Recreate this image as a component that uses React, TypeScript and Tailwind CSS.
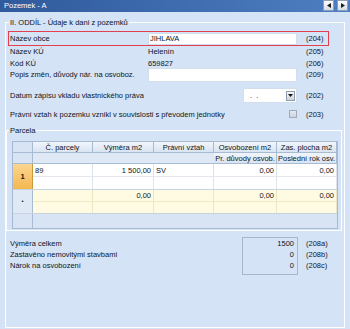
import React, { FC, ReactNode } from "react";

interface RowProps {
    label: string;
    code: string;
    children?: ReactNode;
    className?: string;
}

const Row: FC<RowProps> = ({ label, code, children, className = "" }) => {
    return (
        <div className={"flex w-[324px] pl-[4px] " + className}>
            <div className="flex-1 whitespace-nowrap">{label}</div>
            {children}
            <div className="ml-[9px] w-[24px] whitespace-nowrap">{code}</div>
        </div>
    );
};

const TitleButton: FC<{ dir: "left" | "right" }> = ({ dir }) => (
    <div className="flex h-[11px] w-[11px] items-center justify-center border border-[#8d9db5] bg-gradient-to-b from-[#ffffff] to-[#d3dbe7]">
        <svg width="4" height="5" viewBox="0 0 4 5">
            {dir === "left" ? <polygon points="4,0 0,2.5 4,5" fill="#1c1c1c" /> : <polygon points="0,0 4,2.5 0,5" fill="#1c1c1c" />}
        </svg>
    </div>
);

const HeadCell: FC<{ w: string; children?: ReactNode }> = ({ w, children }) => (
    <div className={w + " flex h-[11px] items-center justify-center whitespace-nowrap border-r border-b border-[#a9bbd2] bg-gradient-to-b from-[#f1f5fb] to-[#d9e4f2]"}>
        {children}
    </div>
);

const Cell: FC<{ w: string; right?: boolean; children?: ReactNode; line?: string }> = ({ w, right, children, line = "border-[#dde3ea]" }) => (
    <div className={w + " flex h-full items-center whitespace-nowrap border-r px-[2px] " + line + (right ? " justify-end" : "")}>
        {children}
    </div>
);

export default function App() {
    const cols = ["w-[60px]", "w-[61px]", "w-[60px]", "w-[63px]", "w-[60px]"];
    return (
        <div className="h-[329px] w-[350px] overflow-hidden bg-[#d5e3f7] font-['Liberation_Sans',Arial,sans-serif] text-[7.5px] leading-[11px] text-[#0e1522]">
            <div className="flex h-[12px] items-start justify-between bg-gradient-to-r from-[#2f5a9c] to-[#4e7ec1] pl-[4px] pr-[2px]">
                <span className="leading-[12px] text-white">Pozemek - A</span>
                <div className="flex gap-[3px]">
                    <TitleButton dir="left" />
                    <TitleButton dir="right" />
                </div>
            </div>

            <fieldset className="mx-[5px] mt-[4px] h-[312px] border border-white">
                <legend className="ml-[3px] px-[1px] leading-[13px]">II. ODDÍL - Údaje k dani z pozemků</legend>

                <div className="ml-[2px] mt-[2px] flex h-[15px] w-[321px] items-center border border-[#e0404f] pl-[1px]">
                    <div className="flex-1 whitespace-nowrap">Název obce</div>
                    <div className="flex h-[12px] w-[149px] items-center border border-[#d3deec] bg-white px-[1px]">JIHLAVA</div>
                    <div className="ml-[9px] w-[22px]">(204)</div>
                </div>

                <Row label="Název KÚ" code="(205)" className="h-[11px]">
                    <div className="w-[149px]">Helenín</div>
                </Row>
                <Row label="Kód KÚ" code="(206)" className="h-[12px] items-center">
                    <div className="w-[149px]">659827</div>
                </Row>
                <Row label="Popis změn, důvody nár. na osvoboz." code="(209)" className="h-[14px] items-start">
                    <div className="-mt-[1px] h-[14px] w-[149px] border border-[#d3deec] bg-white" />
                </Row>

                <Row label="Datum zápisu vkladu vlastnického práva" code="(202)" className="mt-[5px] h-[15px] items-center">
                    <div className="flex h-[15px] w-[54px] items-center justify-between border border-[#d3deec] bg-white pl-[6px] pr-[1px]">
                        <span className="tracking-[1px]">. .</span>
                        <div className="flex h-[10px] w-[9px] items-center justify-center border border-[#8f9cb0] bg-gradient-to-b from-[#f7f7f7] to-[#cfd4da]">
                            <svg width="5" height="3" viewBox="0 0 5 3">
                                <polygon points="0,0 5,0 2.5,3" fill="#111" />
                            </svg>
                        </div>
                    </div>
                </Row>

                <Row label="Právní vztah k pozemku vznikl v souvislosti s převodem jednotky" code="(203)" className="mt-[5px] h-[12px] items-center">
                    <div className="h-[8px] w-[8px] border border-[#9fabbb] bg-gradient-to-b from-[#e4e8ee] to-[#cdd4de]" />
                </Row>

                <fieldset className="mt-[4px] h-[107px] w-[336px] border border-white">
                    <legend className="ml-[2px] px-[1px] leading-[13px]">Parcela</legend>
                    <div className="ml-[5px] mt-[4px] flex h-[88px] w-[326px] flex-col border border-[#a7b9d1] bg-[#d8e4f4]">
                        <div className="flex">
                            <div className="h-[11px] w-[20px] border-r border-b border-[#a9bbd2]" />
                            <HeadCell w={cols[0]}>Č. parcely</HeadCell>
                            <HeadCell w={cols[1]}>Výměra m2</HeadCell>
                            <HeadCell w={cols[2]}>Právní vztah</HeadCell>
                            <HeadCell w={cols[3]}>Osvobození m2</HeadCell>
                            <HeadCell w={cols[4]}>Zas. plocha m2</HeadCell>
                        </div>
                        <div className="flex">
                            <div className="h-[11px] w-[20px] border-r border-b border-[#a9bbd2]" />
                            <div className="h-[11px] w-[181px] border-b border-[#a9bbd2] bg-[#dfe8f5]" />
                            <HeadCell w={cols[3]}>Pr. důvody osvob.</HeadCell>
                            <HeadCell w={cols[4]}>Poslední rok osv.</HeadCell>
                        </div>

                        <div className="flex h-[26px] border-b border-[#c9d3df]">
                            <div className="flex w-[20px] items-center justify-center border-r border-[#c99a3c] bg-gradient-to-b from-[#fcd58f] to-[#f3b84c] font-bold">1</div>
                            <div className="flex flex-col bg-white">
                                <div className="flex h-[13px] border-b border-[#e4e8ee]">
                                    <Cell w={cols[0]}>89</Cell>
                                    <Cell w={cols[1]} right>1 500,00</Cell>
                                    <Cell w={cols[2]}>SV</Cell>
                                    <Cell w={cols[3]} right>0,00</Cell>
                                    <Cell w={cols[4]} right>0,00</Cell>
                                </div>
                                <div className="flex h-[12px]">
                                    <Cell w={cols[0]} />
                                    <Cell w={cols[1]} />
                                    <Cell w={cols[2]} />
                                    <Cell w={cols[3]} />
                                    <Cell w={cols[4]} />
                                </div>
                            </div>
                        </div>

                        <div className="flex h-[24px] border-b border-[#c9d3df]">
                            <div className="flex w-[20px] items-center justify-center border-r border-[#a9bbd2] bg-[#dfe8f5] text-[6px]">•</div>
                            <div className="flex flex-col bg-[#fffbe3]">
                                <div className="flex h-[12px] border-b border-[#efe9c8]">
                                    <Cell w={cols[0]} line="border-[#ece6c6]" />
                                    <Cell w={cols[1]} right line="border-[#ece6c6]">0,00</Cell>
                                    <Cell w={cols[2]} line="border-[#ece6c6]" />
                                    <Cell w={cols[3]} right line="border-[#ece6c6]">0,00</Cell>
                                    <Cell w={cols[4]} right line="border-[#ece6c6]">0,00</Cell>
                                </div>
                                <div className="flex h-[11px]">
                                    <Cell w={cols[0]} line="border-[#ece6c6]" />
                                    <Cell w={cols[1]} line="border-[#ece6c6]" />
                                    <Cell w={cols[2]} line="border-[#ece6c6]" />
                                    <Cell w={cols[3]} line="border-[#ece6c6]" />
                                    <Cell w={cols[4]} line="border-[#ece6c6]" />
                                </div>
                            </div>
                        </div>

                        <div className="flex flex-1">
                            <div className="w-[20px] border-r border-[#a9bbd2]" />
                        </div>
                    </div>
                </fieldset>

                <div className="mt-[6px] flex w-[324px] pl-[4px]">
                    <div className="flex-1 pt-[1px]">
                        <div>Výměra celkem</div>
                        <div>Zastavěno nemovitými stavbami</div>
                        <div>Nárok na osvobození</div>
                    </div>
                    <div className="h-[38px] w-[56px] border border-[#a9b7c9] pr-[3px] text-right">
                        <div>1500</div>
                        <div>0</div>
                        <div>0</div>
                    </div>
                    <div className="ml-[8px] w-[24px] pt-[1px]">
                        <div>(208a)</div>
                        <div>(208b)</div>
                        <div>(208c)</div>
                    </div>
                </div>
            </fieldset>
        </div>
    );
}
